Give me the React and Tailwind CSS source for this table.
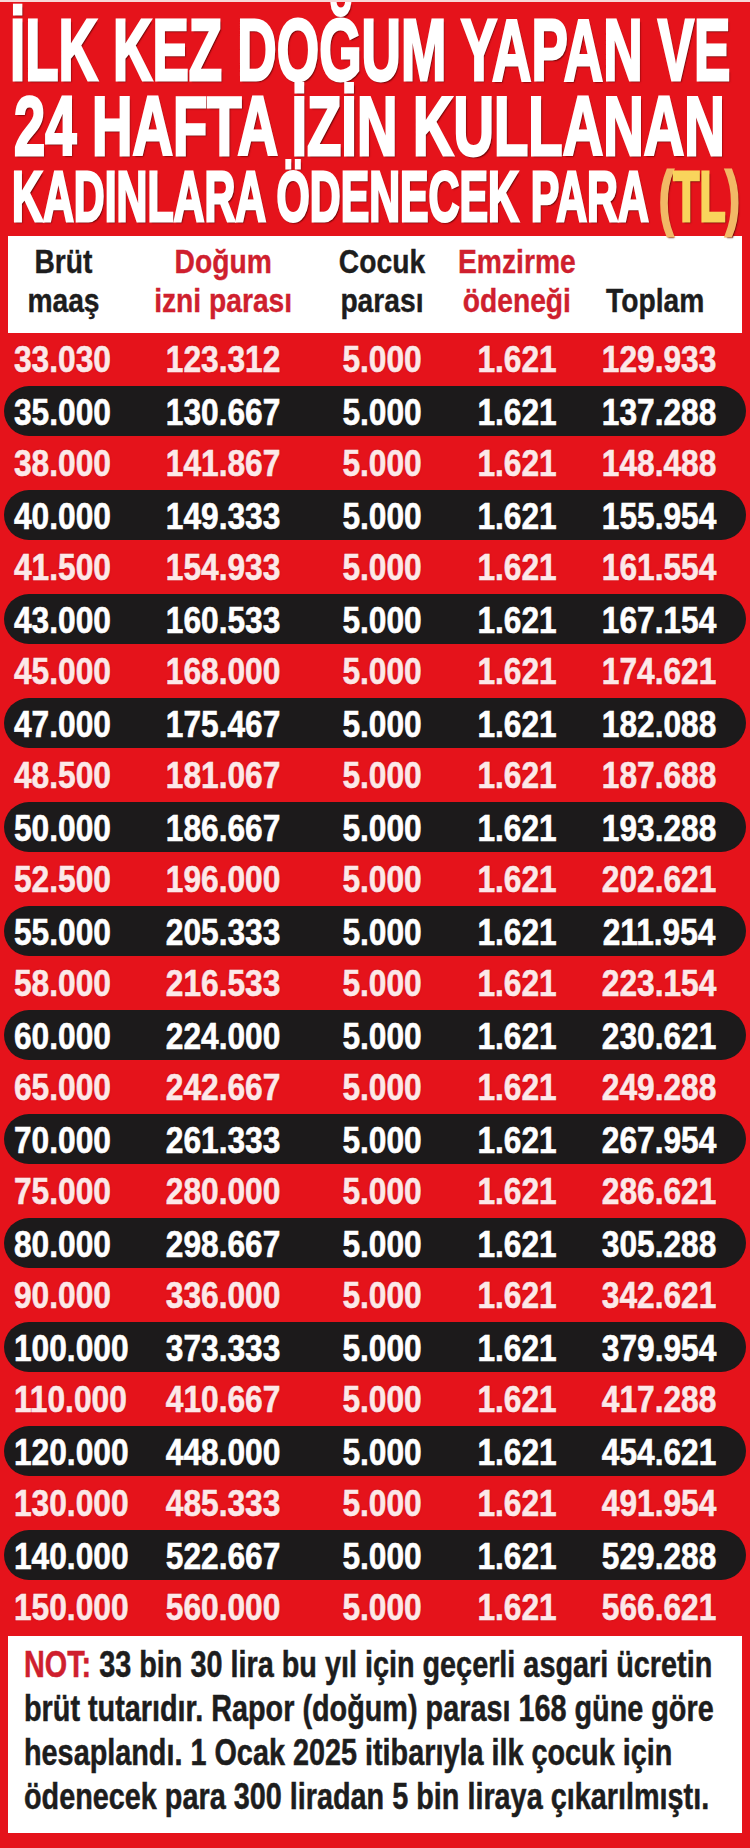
const rows = [
  ["33.030", "123.312", "129.933"],
  ["35.000", "130.667", "137.288"],
  ["38.000", "141.867", "148.488"],
  ["40.000", "149.333", "155.954"],
  ["41.500", "154.933", "161.554"],
  ["43.000", "160.533", "167.154"],
  ["45.000", "168.000", "174.621"],
  ["47.000", "175.467", "182.088"],
  ["48.500", "181.067", "187.688"],
  ["50.000", "186.667", "193.288"],
  ["52.500", "196.000", "202.621"],
  ["55.000", "205.333", "211.954"],
  ["58.000", "216.533", "223.154"],
  ["60.000", "224.000", "230.621"],
  ["65.000", "242.667", "249.288"],
  ["70.000", "261.333", "267.954"],
  ["75.000", "280.000", "286.621"],
  ["80.000", "298.667", "305.288"],
  ["90.000", "336.000", "342.621"],
  ["100.000", "373.333", "379.954"],
  ["110.000", "410.667", "417.288"],
  ["120.000", "448.000", "454.621"],
  ["130.000", "485.333", "491.954"],
  ["140.000", "522.667", "529.288"],
  ["150.000", "560.000", "566.621"],
];

const FONT = "font-['Liberation_Sans','Arial',sans-serif] font-bold";

function N({ children }) {
  return <span className="inline-block scale-x-[0.88] [-webkit-text-stroke:0.6px_currentColor]">{children}</span>;
}

function Cells({ r }) {
  return (
    <>
      <div className="pl-[10px] whitespace-nowrap">
        <span className="inline-block origin-left scale-x-[0.88] [-webkit-text-stroke:0.6px_currentColor]">{r[0]}</span>
      </div>
      <div className="flex justify-center whitespace-nowrap">
        <N>{r[1]}</N>
      </div>
      <div className="flex justify-center whitespace-nowrap">
        <N>5.000</N>
      </div>
      <div className="flex justify-center whitespace-nowrap">
        <N>1.621</N>
      </div>
      <div className="flex justify-center pl-[6px] whitespace-nowrap">
        <N>{r[2]}</N>
      </div>
    </>
  );
}

function H({ children }) {
  return (
    <span className="inline-block text-center scale-x-[0.83] [-webkit-text-stroke:0.4px_currentColor]">
      {children}
    </span>
  );
}

export default function App() {
  return (
    <div
      className={`${FONT} w-[750px] h-[1848px] overflow-hidden bg-[#e5131b] border-t-[2px] border-[#f7d9d9]`}
    >
      {/* Title */}
      <div className="text-white whitespace-nowrap pt-[4px] [text-shadow:1px_1px_0_#7a0000,2px_2px_2px_#5a0000]">
        <div className="h-[88px] text-[88px] leading-[88px] pl-[10px]">
          <span className="inline-block origin-left scale-x-[0.62] [-webkit-text-stroke:3px_white]">
            İLK KEZ DOĞUM YAPAN VE
          </span>
        </div>
        <div className="h-[64px] text-[84px] leading-[64px] pl-[14px]">
          <span className="inline-block origin-left scale-x-[0.668] [-webkit-text-stroke:3px_white]">
            24 HAFTA İZİN KULLANAN
          </span>
        </div>
        <div className="h-[78px] text-[70px] leading-[78px] pl-[12px]">
          <span className="inline-block origin-left scale-x-[0.611] [-webkit-text-stroke:3px_white]">
            KADINLARA ÖDENECEK PARA{" "}
            <span className="text-[#f2b866] [-webkit-text-stroke:3px_#f2b866]">(</span>
            <span className="text-[#f9d45c] [-webkit-text-stroke:3px_#f9d45c]">TL</span>
            <span className="text-[#f2b866] [-webkit-text-stroke:3px_#f2b866]">)</span>
          </span>
        </div>
      </div>

      {/* Header */}
      <div className="mx-[8px] h-[97px] bg-white grid grid-cols-[142px_146px_172px_98px_174px] items-end pb-[13px] text-[34px] leading-[39px] text-[#1d1d1d]">
        <div className="w-[110px] flex justify-center whitespace-nowrap">
          <H>
            Brüt
            <br />
            maaş
          </H>
        </div>
        <div className="flex justify-center text-[#cf1f2e] whitespace-nowrap">
          <H>
            Doğum
            <br />
            izni parası
          </H>
        </div>
        <div className="flex justify-center whitespace-nowrap">
          <H>
            Cocuk
            <br />
            parası
          </H>
        </div>
        <div className="flex justify-center text-[#cf1f2e] whitespace-nowrap">
          <H>
            Emzirme
            <br />
            ödeneği
          </H>
        </div>
        <div className="flex justify-center pl-[4px] whitespace-nowrap">
          <H>Toplam</H>
        </div>
      </div>

      {/* Rows */}
      <div className="text-[36px]">
        {rows.map((r, i) =>
          i % 2 === 0 ? (
            <div
              key={i}
              className="h-[52px] mx-[4px] grid grid-cols-[146px_146px_172px_98px_180px] items-center text-[#fde8e8] [text-shadow:0_0_2px_#b0101a]"
            >
              <Cells r={r} />
            </div>
          ) : (
            <div key={i} className="h-[52px] py-[1px]">
              <div className="h-[50px] mx-[4px] rounded-full bg-[#1c1a1b] grid grid-cols-[146px_146px_172px_98px_180px] items-center text-white">
                <Cells r={r} />
              </div>
            </div>
          )
        )}
      </div>

      {/* Note */}
      <div className="mt-[3px] mx-[8px] h-[197px] bg-white pt-[7px] pl-[16px] text-[36px] leading-[44px] text-[#1d1d1d] whitespace-nowrap">
        <span className="inline-block origin-left scale-x-[0.8] [-webkit-text-stroke:0.5px_currentColor]">
          <span className="text-[#cf1f2e]">NOT:</span> 33 bin 30 lira bu yıl için geçerli asgari ücretin
          <br />
          brüt tutarıdır. Rapor (doğum) parası 168 güne göre
          <br />
          hesaplandı. 1 Ocak 2025 itibarıyla ilk çocuk için
          <br />
          ödenecek para 300 liradan 5 bin liraya çıkarılmıştı.
        </span>
      </div>
    </div>
  );
}
